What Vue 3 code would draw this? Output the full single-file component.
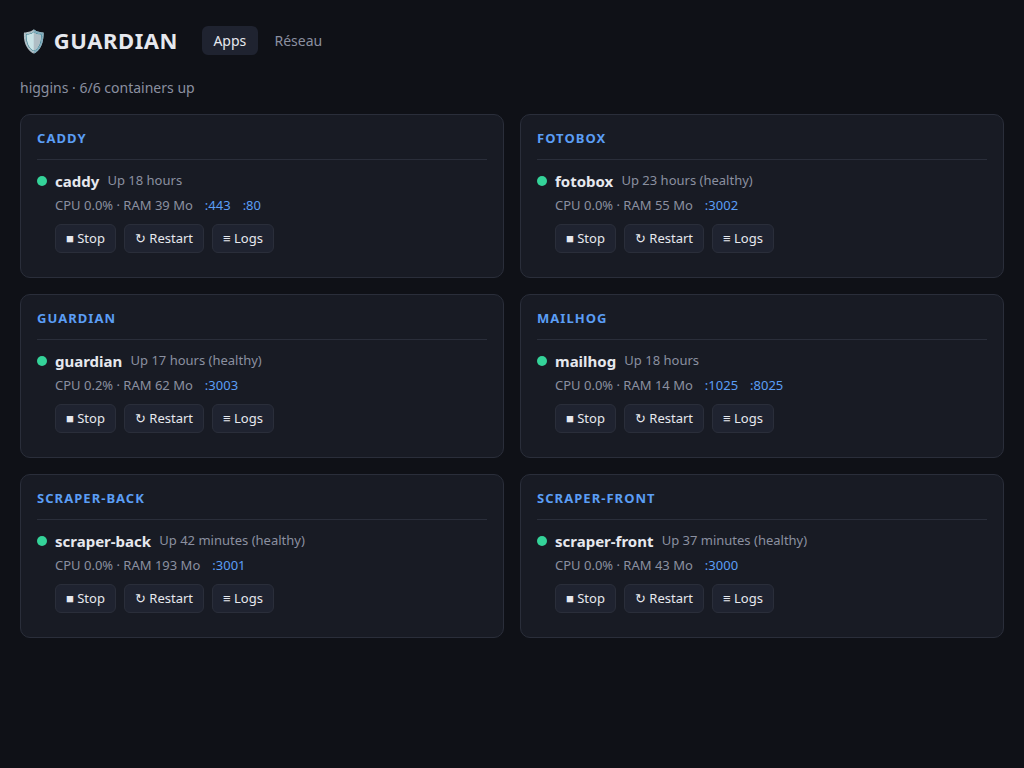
<script setup>
import { ref } from "vue";

const tabs = ["Apps", "Réseau"];
const current = ref("Apps");

const apps = [
  { name: "caddy", status: "Up 18 hours", cpu: "0.0", ram: 39, ports: [443, 80] },
  { name: "fotobox", status: "Up 23 hours (healthy)", cpu: "0.0", ram: 55, ports: [3002] },
  { name: "guardian", status: "Up 17 hours (healthy)", cpu: "0.2", ram: 62, ports: [3003] },
  { name: "mailhog", status: "Up 18 hours", cpu: "0.0", ram: 14, ports: [1025, 8025] },
  { name: "scraper-back", status: "Up 42 minutes (healthy)", cpu: "0.0", ram: 193, ports: [3001] },
  { name: "scraper-front", status: "Up 37 minutes (healthy)", cpu: "0.0", ram: 43, ports: [3000] },
];

const actions = ["■ Stop", "↻ Restart", "≡ Logs"];
</script>

<template>
  <div class="page">
    <header>
      <h1>🛡️ GUARDIAN</h1>
      <nav>
        <button
          v-for="tab in tabs"
          :key="tab"
          class="tab"
          :class="{ active: tab === current }"
          @click="current = tab"
        >
          {{ tab }}
        </button>
      </nav>
    </header>
    <p class="summary">higgins · {{ apps.length }}/{{ apps.length }} containers up</p>
    <main class="grid">
      <section v-for="app in apps" :key="app.name" class="card">
        <h2>{{ app.name }}</h2>
        <div class="container">
          <span class="dot"></span>
          <div class="info">
            <div class="title">
              <strong>{{ app.name }}</strong>
              <span class="status">{{ app.status }}</span>
            </div>
            <div class="stats">
              <span>CPU {{ app.cpu }}% · RAM {{ app.ram }} Mo</span>
              <a v-for="port in app.ports" :key="port" href="#">:{{ port }}</a>
            </div>
            <div class="actions">
              <button v-for="action in actions" :key="action">{{ action }}</button>
            </div>
          </div>
        </div>
      </section>
    </main>
  </div>
</template>

<style>
body {
  background: #0f1117;
}
</style>

<style scoped>
.page {
  padding: 20px;
  color: #e6e8ee;
  font: 15px/1.5 "Noto Sans", sans-serif;
}

header {
  display: flex;
  align-items: center;
  gap: 24px;
  height: 41px;
}

h1 {
  margin: 0;
  font-size: 22px;
  line-height: 31px;
  letter-spacing: 0.025em;
  white-space: nowrap;
}

nav {
  display: flex;
  gap: 5.4px;
}

button {
  font-family: inherit;
  cursor: pointer;
}

.tab {
  height: 29px;
  padding: 0 11.4px;
  border: 0;
  border-radius: 6px;
  background: none;
  color: #8b90a0;
  font-size: 14px;
}

.tab.active {
  background: #1f2330;
  color: #e6e8ee;
}

.summary {
  margin: 16px 0 15px;
  color: #8b90a0;
  font-size: 14px;
  line-height: 22px;
}

.grid {
  display: grid;
  grid-template-columns: 1fr 1fr;
  gap: 16px;
}

.card {
  box-sizing: border-box;
  height: 164px;
  padding: 16px;
  border: 1px solid #2a2e3a;
  border-radius: 10px;
  background: #181b24;
}

h2 {
  margin: 0 0 12px;
  padding-bottom: 13px;
  border-bottom: 1px solid #2a2e3a;
  color: #5b9ef5;
  font-size: 13px;
  line-height: 15px;
  letter-spacing: 0.08em;
  text-transform: uppercase;
}

.container {
  display: flex;
  gap: 8px;
}

.dot {
  width: 10px;
  height: 10px;
  margin-top: 4px;
  border-radius: 50%;
  background: #34d399;
}

.title {
  display: flex;
  gap: 8.2px;
  height: 20px;
}

.title strong {
  font-size: 15px;
  line-height: 18px;
}

.status {
  color: #8b90a0;
  font-size: 13px;
  line-height: 17px;
}

.stats {
  display: flex;
  gap: 12px;
  margin-top: 3px;
  color: #8b90a0;
  font-size: 13px;
  line-height: 20px;
}

.stats a {
  color: #5b9ef5;
  text-decoration: none;
}

.actions {
  display: flex;
  gap: 8px;
  margin-top: 9px;
}

.actions button {
  height: 29px;
  padding: 0 10px 1px;
  border: 1px solid #2a2e3a;
  border-radius: 6px;
  background: #1f2330;
  color: #e6e8ee;
  font-size: 13px;
}
</style>
